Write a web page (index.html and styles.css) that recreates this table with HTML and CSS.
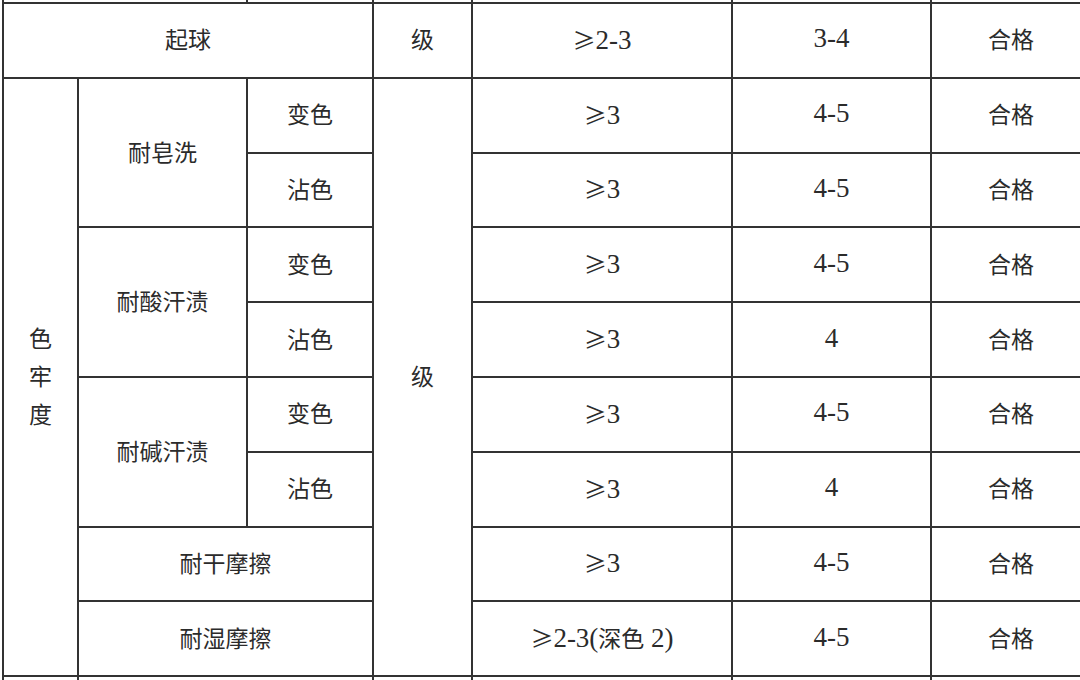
FILE: index.html
```html
<!DOCTYPE html>
<html lang="zh-CN">
<head>
<meta charset="utf-8">
<title>色牢度检测结果</title>
<link rel="stylesheet" href="styles.css">
</head>
<body>
<table class="grid">
  <colgroup>
    <col class="c1"><col class="c2"><col class="c3"><col class="c4"><col class="c5"><col class="c6"><col class="c7">
  </colgroup>
  <tr class="strip top">
    <td colspan="2"></td><td></td><td></td><td></td><td></td><td></td>
  </tr>
  <tr class="row">
    <td colspan="3">起球</td>
    <td>级</td>
    <td class="num"><span class="ge">≥</span>2-3</td>
    <td class="num">3-4</td>
    <td>合格</td>
  </tr>
  <tr class="row">
    <td rowspan="8" class="vert">色<br>牢<br>度</td>
    <td rowspan="2">耐皂洗</td>
    <td>变色</td>
    <td rowspan="8">级</td>
    <td class="num"><span class="ge">≥</span>3</td>
    <td class="num">4-5</td>
    <td>合格</td>
  </tr>
  <tr class="row">
    <td>沾色</td>
    <td class="num"><span class="ge">≥</span>3</td>
    <td class="num">4-5</td>
    <td>合格</td>
  </tr>
  <tr class="row">
    <td rowspan="2">耐酸汗渍</td>
    <td>变色</td>
    <td class="num"><span class="ge">≥</span>3</td>
    <td class="num">4-5</td>
    <td>合格</td>
  </tr>
  <tr class="row">
    <td>沾色</td>
    <td class="num"><span class="ge">≥</span>3</td>
    <td class="num">4</td>
    <td>合格</td>
  </tr>
  <tr class="row">
    <td rowspan="2">耐碱汗渍</td>
    <td>变色</td>
    <td class="num"><span class="ge">≥</span>3</td>
    <td class="num">4-5</td>
    <td>合格</td>
  </tr>
  <tr class="row">
    <td>沾色</td>
    <td class="num"><span class="ge">≥</span>3</td>
    <td class="num">4</td>
    <td>合格</td>
  </tr>
  <tr class="row">
    <td colspan="2">耐干摩擦</td>
    <td class="num"><span class="ge">≥</span>3</td>
    <td class="num">4-5</td>
    <td>合格</td>
  </tr>
  <tr class="row">
    <td colspan="2">耐湿摩擦</td>
    <td class="num"><span class="ge">≥</span>2-3(<span class="cjk">深色</span> 2)</td>
    <td class="num">4-5</td>
    <td>合格</td>
  </tr>
  <tr class="strip bottom">
    <td></td><td colspan="2"></td><td></td><td></td><td></td><td></td>
  </tr>
</table>
</body>
</html>
```
FILE: styles.css
```css
html, body {
  margin: 0;
  padding: 0;
  background: #ffffff;
  overflow: hidden;
}

body {
  width: 1080px;
  height: 680px;
}

.grid {
  border-collapse: collapse;
  table-layout: fixed;
  width: 1088px;
  margin-left: 2px;
  font-size: 23px;
  color: #2b2b2b;
}

.c1 { width: 75px; }
.c2 { width: 169px; }
.c3 { width: 126px; }
.c4 { width: 99px; }
.c5 { width: 260px; }
.c6 { width: 199px; }
.c7 { width: 160px; }

.grid td {
  border: 2px solid #333333;
  padding: 0 0 4px 0;
  text-align: center;
  vertical-align: middle;
  font-family: "Noto Sans CJK SC", sans-serif;
}

.row {
  height: 74.8px;
}

.grid td.num {
  font-family: "Liberation Serif", "Noto Sans CJK SC", serif;
  font-size: 27px;
  padding-bottom: 3px;
}

.ge {
  font-family: "Noto Sans CJK SC", sans-serif;
  font-size: 23px;
}

.cjk {
  font-family: "Noto Sans CJK SC", sans-serif;
  font-size: 23px;
}

.grid .strip td {
  height: 0;
  padding: 0;
  line-height: 0;
}

.strip.top {
  height: 3px;
}

.strip.top td {
  border-top-style: hidden;
}

.strip.bottom {
  height: 6px;
}

.strip.bottom td {
  border-bottom-style: hidden;
}

.vert {
  line-height: 38px;
}
```
